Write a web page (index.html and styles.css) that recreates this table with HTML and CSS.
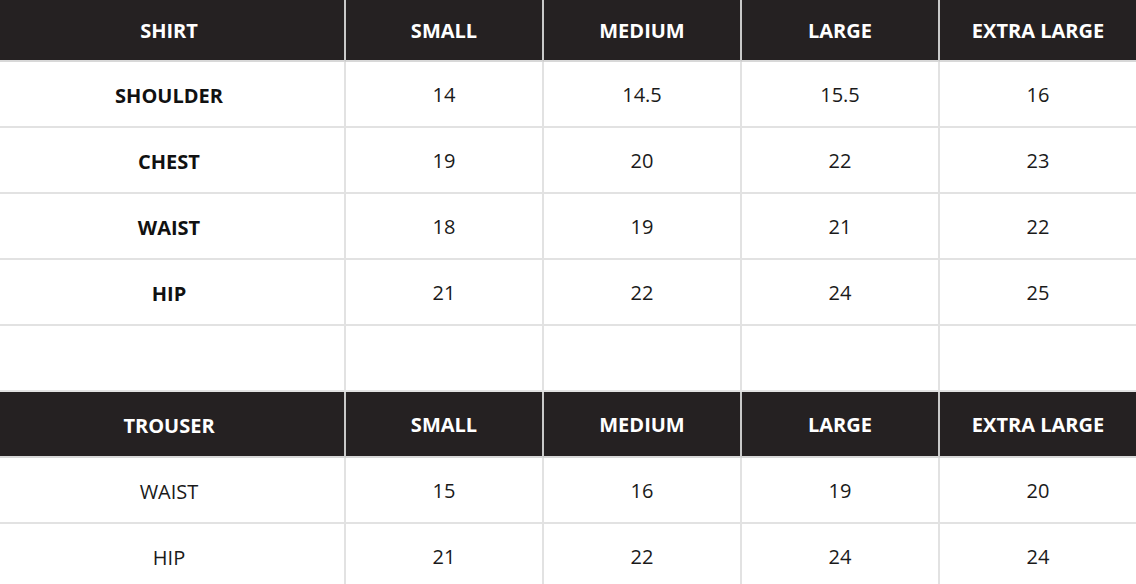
FILE: index.html
```html
<!DOCTYPE html>
<html>
<head>
<meta charset="utf-8">
<link rel="stylesheet" href="styles.css">
</head>
<body>
<div class="chart">
  <div class="row head first"><div class="cell">SHIRT</div><div class="cell">SMALL</div><div class="cell">MEDIUM</div><div class="cell">LARGE</div><div class="cell">EXTRA LARGE</div></div>
  <div class="row"><div class="cell label">SHOULDER</div><div class="cell">14</div><div class="cell">14.5</div><div class="cell">15.5</div><div class="cell">16</div></div>
  <div class="row"><div class="cell label">CHEST</div><div class="cell">19</div><div class="cell">20</div><div class="cell">22</div><div class="cell">23</div></div>
  <div class="row"><div class="cell label">WAIST</div><div class="cell">18</div><div class="cell">19</div><div class="cell">21</div><div class="cell">22</div></div>
  <div class="row"><div class="cell label">HIP</div><div class="cell">21</div><div class="cell">22</div><div class="cell">24</div><div class="cell">25</div></div>
  <div class="row"><div class="cell"></div><div class="cell"></div><div class="cell"></div><div class="cell"></div><div class="cell"></div></div>
  <div class="row head"><div class="cell">TROUSER</div><div class="cell">SMALL</div><div class="cell">MEDIUM</div><div class="cell">LARGE</div><div class="cell">EXTRA LARGE</div></div>
  <div class="row"><div class="cell">WAIST</div><div class="cell">15</div><div class="cell">16</div><div class="cell">19</div><div class="cell">20</div></div>
  <div class="row"><div class="cell">HIP</div><div class="cell">21</div><div class="cell">22</div><div class="cell">24</div><div class="cell">24</div></div>
</div>
</body>
</html>
```
FILE: styles.css
```css
html, body {
  margin: 0;
  padding: 0;
  background: #fff;
}
.chart {
  width: 1136px;
  font-family: "Open Sans", "Liberation Sans", sans-serif;
  color: #1a1a1a;
  font-size: 20px;
}
.row {
  display: grid;
  grid-template-columns: 346px 198px 198px 198px 196px;
  height: 66px;
}
.row.first {
  height: 62px;
}
.cell {
  display: flex;
  align-items: center;
  justify-content: center;
  border-bottom: 2px solid #e2e2e2;
  border-right: 2px solid #e2e2e2;
  box-sizing: border-box;
  padding-top: 1px;
}
.cell:first-child {
  padding-right: 6px;
  padding-top: 2px;
}
.cell:last-child {
  border-right: none;
}
.row.first .cell {
  padding-top: 0;
}
.label {
  font-weight: 700;
  color: #111;
}
.head .cell {
  background: #252122;
  color: #fff;
  font-weight: 700;
  border-bottom: 2px solid #d8d8d8;
  border-right-color: #c9c9c9;
}
.head .cell:last-child {
  border-right: none;
}
```
